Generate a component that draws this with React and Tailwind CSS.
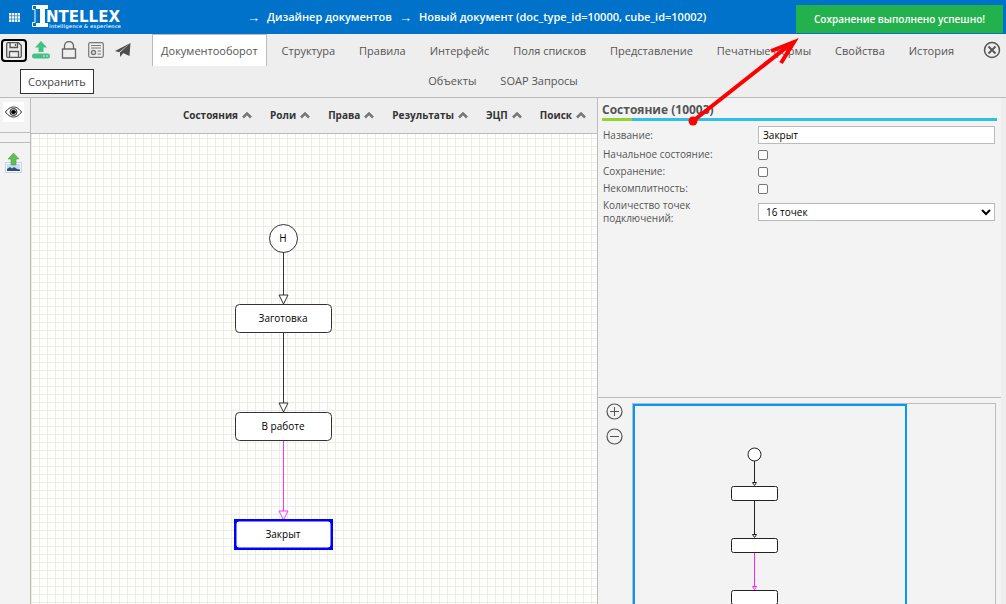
const TABS = [
  'Документооборот',
  'Структура',
  'Правила',
  'Интерфейс',
  'Поля списков',
  'Представление',
  'Печатные формы',
  'Свойства',
  'История',
]

const MORE_TABS = ['Объекты', 'SOAP Запросы']

const MENUS = ['Состояния', 'Роли', 'Права', 'Результаты', 'ЭЦП', 'Поиск']

const FLAGS = [
  { id: 'initial', label: 'Начальное состояние:' },
  { id: 'saving', label: 'Сохранение:' },
  { id: 'incomplete', label: 'Некомплитность:' },
]

function Logo() {
  return (
    <svg width="94" height="28" viewBox="0 0 94 28" role="img" aria-label="Intellex">
      <path d="M5 2h12v4h-3v14h3v4H5v-4h4V6H5z" fill="#fff" />
      <path d="M7 2.500H1.500v4H4v13H1.500v4H7" fill="none" stroke="#fff" />
      <text x="15" y="19" fill="#fff" fontSize="15" fontWeight="700" fontFamily="DejaVu Sans, sans-serif">NTELLEX</text>
      <text x="18" y="25" fill="#b9dcf7" fontSize="5" fontFamily="DejaVu Sans, sans-serif">intelligence &amp; experience</text>
    </svg>
  )
}

function AppsIcon() {
  return (
    <svg width="11" height="9" viewBox="0 0 11 9" fill="#fff" aria-hidden="true">
      {[0, 3.2, 6.4].map((y) => [0, 2.9, 5.8, 8.7].map((x) => <rect key={`${x}-${y}`} x={x} y={y} width="2.300" height="2.500" />))}
    </svg>
  )
}

function SaveIcon() {
  return (
    <svg width="16" height="16" viewBox="0 0 16 16" fill="none" stroke="#555" strokeWidth="1.3" aria-hidden="true">
      <path d="M2 .7h10.5l2.8 2.8V14a1.3 1.3 0 0 1-1.3 1.3H2A1.3 1.3 0 0 1 .7 14V2A1.3 1.3 0 0 1 2 .7z" />
      <path d="M4 1v4.5h7.5V1M9.5 2v2M3.5 15V9.5h9V15" />
    </svg>
  )
}

function UploadIcon() {
  return (
    <svg width="18" height="18" viewBox="0 0 18 18" fill="#43c084" aria-hidden="true">
      <path d="M9 0l6 6.5h-3.5V11h-5V6.5H3z" />
      <rect x="0" y="12.500" width="18" height="5" rx="2.500" />
      <circle cx="12" cy="15" r=".8" fill="#eee" />
      <circle cx="15" cy="15" r=".8" fill="#eee" />
    </svg>
  )
}

function LockIcon() {
  return (
    <svg width="16" height="18" viewBox="0 0 16 18" fill="none" stroke="#666" strokeWidth="1.300" aria-hidden="true">
      <path d="M1.500 8h13v9h-13zM3.500 8V5a4.500 4.500 0 0 1 9 0v3" />
    </svg>
  )
}

function ReportIcon() {
  return (
    <svg width="16" height="16" viewBox="0 0 16 16" fill="none" stroke="#777" strokeWidth="1.200" aria-hidden="true">
      <rect x=".7" y=".7" width="14.600" height="14.600" rx="1.500" />
      <path d="M3 3.500h10M3 6h10M9.500 9h3.500M9.500 12h3.500" />
      <circle cx="5.500" cy="10.500" r="2" strokeWidth="1.500" />
    </svg>
  )
}

function SendIcon() {
  return (
    <svg width="16" height="14" viewBox="0 0 16 14" fill="#4d4d4d" aria-hidden="true">
      <path d="M15.500 0L0 8l4 1.200zM15.500 0L5 9.500V14l2.500-3zM15.500 0L8 10l6.500 3z" />
    </svg>
  )
}

function CloseIcon() {
  return (
    <svg width="18" height="18" viewBox="0 0 18 18" fill="none" stroke="#555" strokeWidth="1.500" aria-hidden="true">
      <circle cx="9" cy="9" r="7.500" />
      <path d="M5.500 5.500l7 7M12.500 5.500l-7 7" strokeWidth="1.800" />
    </svg>
  )
}

function EyeIcon() {
  return (
    <svg width="17" height="12" viewBox="0 0 17 12" fill="none" stroke="#222" aria-hidden="true">
      <path d="M.5 6C3.500 2 6 1 8.500 1s5 1 8 5c-3 4-5.500 5-8 5s-5-1-8-5z" />
      <circle cx="8.500" cy="6" r="3.500" />
      <circle cx="8.500" cy="6" r="2" fill="#000" />
    </svg>
  )
}

function ExportImageIcon() {
  return (
    <svg width="17" height="20" viewBox="0 0 17 20" aria-hidden="true">
      <rect x=".5" y="9.500" width="16" height="10" fill="#f4f8fc" stroke="#c9d3dc" />
      <rect x="2" y="11" width="13" height="7" fill="#c9def2" />
      <path d="M2 18v-2l3-2 2 1.500L9 14l3 2 3 .5V18z" fill="#2f4f7c" />
      <path d="M8.500 0L14 6h-3v6H6V6H3z" fill="#62bd57" stroke="#4ba344" strokeWidth=".6" />
    </svg>
  )
}

function ZoomIcon({ plus }) {
  return (
    <svg width="17" height="17" viewBox="0 0 17 17" fill="none" stroke="#555" aria-hidden="true">
      <circle cx="8.500" cy="8.500" r="7.500" strokeWidth="1.200" />
      <path d={plus ? 'M4 8.500h9M8.500 4v9' : 'M4 8.500h9'} />
    </svg>
  )
}

function Workflow() {
  return (
    <svg className="absolute left-0 top-0" width="400" height="440" fill="#fff" stroke="#333" fontFamily="Open Sans, sans-serif" fontSize="10">
      <circle cx="252.500" cy="104.500" r="14" />
      <path d="M252.500 118v43M252.500 198v71" />
      <path d="M248 161h9l-4.500 9zM248 269h9l-4.500 9z" />
      <path d="M252.500 306v71M248 377h9l-4.500 9z" stroke="#f3f" />
      <rect x="204.500" y="170.500" width="96" height="28" rx="4" />
      <rect x="204.500" y="278.500" width="96" height="28" rx="4" />
      <rect x="204.500" y="386.500" width="96" height="28" stroke="#00f" strokeWidth="3" />
      <rect x="205.500" y="387.500" width="94" height="26" rx="3" stroke="none" />
      <g fill="#000" stroke="none" textAnchor="middle">
        <text x="252" y="108">Н</text>
        <text x="252" y="188">Заготовка</text>
        <text x="252" y="296">В работе</text>
        <text x="252" y="404">Закрыт</text>
      </g>
    </svg>
  )
}

function MiniWorkflow() {
  return (
    <svg className="block" width="200" height="240" fill="#fff" stroke="#222" aria-hidden="true">
      <circle cx="119.500" cy="48.500" r="6.500" />
      <path d="M119.500 55v22M119.500 94v35" />
      <path d="M117.500 76.500h4l-2 3zM117.500 128.500h4l-2 3z" />
      <path d="M119.500 146v35M117.500 180.500h4l-2 3z" stroke="#f2f" />
      <rect x="96.500" y="80.500" width="46" height="14" rx="2" />
      <rect x="96.500" y="132.500" width="46" height="14" rx="2" />
      <rect x="96.500" y="184.500" width="46" height="14" rx="2" />
    </svg>
  )
}

function StatePanel() {
  return (
    <section className="min-h-[299px] px-1 pt-1">
      <h2 className="text-[12px] font-bold leading-4 text-[#555]">Состояние (10003)</h2>
      <div className="flex h-[3px]">
        <div className="w-[30px] bg-[#8fd42f]" />
        <div className="flex-1 bg-[#2fc0ea]" />
      </div>
      <form className="grid grid-cols-[155px_1fr] items-center gap-y-1 pl-px pr-[2px] pt-[5px] text-[10px] leading-[13px] text-[#555]">
        <label htmlFor="name">Название:</label>
        <input id="name" type="text" defaultValue="Закрыт" className="h-[18px] w-full border border-[#bbb] bg-white px-1 text-black" />
        {FLAGS.map((f) => (
          <div key={f.id} className="contents">
            <label htmlFor={f.id}>{f.label}</label>
            <input
              id={f.id}
              type="checkbox"
              className="h-[10px] w-[10px] appearance-none rounded-[2px] border border-[#767676] bg-white checked:bg-[#0072c9]"
            />
          </div>
        ))}
        <label htmlFor="points" className="w-[100px]">Количество точек подключений:</label>
        <select id="points" className="h-[18px] w-full border border-[#bbb] bg-white px-[3px] text-black">
          <option>16 точек</option>
        </select>
      </form>
    </section>
  )
}

function App() {
  return (
    <div className="relative flex h-screen flex-col overflow-hidden bg-[#eee] font-['Open_Sans',sans-serif]">
      <header className="flex h-[34px] shrink-0 items-center bg-[#0072c9] text-[11px] font-semibold text-white">
        <button type="button" aria-label="Меню" className="ml-[9px] mr-[11px]"><AppsIcon /></button>
        <a href="#home"><Logo /></a>
        <nav className="ml-[122px] flex items-center gap-[7px]">
          <span className="text-[13px] leading-4">→</span>
          <a href="#designer">Дизайнер документов</a>
          <span className="text-[13px] leading-4">→</span>
          <a href="#document">Новый документ (doc_type_id=10000, cube_id=10002)</a>
        </nav>
      </header>

      <div className="relative shrink-0 border-b border-[#bbb] text-[11px] text-[#555]">
        <div className="flex h-8 items-center">
          <button type="button" aria-label="Сохранить" className="ml-px flex h-[23px] w-[26px] items-center justify-center rounded-[4px] border-2 border-black">
            <SaveIcon />
          </button>
          <div className="ml-[5px] flex items-center gap-[11px]">
            <button type="button" aria-label="Загрузить"><UploadIcon /></button>
            <button type="button" aria-label="Блокировка"><LockIcon /></button>
            <button type="button" aria-label="Отчёт"><ReportIcon /></button>
            <button type="button" aria-label="Отправить"><SendIcon /></button>
          </div>
          <nav className="ml-[21px] flex h-full flex-1 justify-between">
            {TABS.map((t, i) => (
              <a
                key={t}
                href="#tab"
                className={`flex items-center whitespace-nowrap border-x border-t px-2 pt-px ${i === 0 ? 'border-[#bbb] bg-white' : 'border-transparent'}`}
              >
                {t}
              </a>
            ))}
          </nav>
          <button type="button" aria-label="Закрыть" className="ml-5 mr-[5px]"><CloseIcon /></button>
        </div>
        <nav className="flex h-[31px] items-center justify-center gap-6">
          {MORE_TABS.map((t) => <a key={t} href="#tab">{t}</a>)}
        </nav>
        <div role="tooltip" className="absolute left-5 top-[35px] border border-[#333] bg-white px-[7px] py-[3px] leading-[17px] text-[#444]">
          Сохранить
        </div>
      </div>

      <div className="flex min-h-0 flex-1">
        <aside className="flex w-[31px] shrink-0 flex-col border-r border-[#bbb] bg-[#f3f3f3]">
          <button type="button" aria-label="Просмотр" className="ml-[3px] mt-1 flex h-5 w-[21px] items-center justify-center bg-white"><EyeIcon /></button>
          <div className="mt-[10px] h-[11px] border-y border-[#bbb]" />
          <button type="button" aria-label="Экспорт изображения" className="ml-[5px] mt-[10px] self-start"><ExportImageIcon /></button>
        </aside>

        <main className="flex min-w-0 flex-1 flex-col">
          <nav className="flex h-9 shrink-0 items-center justify-end gap-[18px] border-b border-[#bbb] pr-[11px] text-[10px] font-bold text-[#333]">
            {MENUS.map((m) => (
              <button key={m} type="button" className="flex items-center gap-1">
                {m}
                <svg width="10" height="7" viewBox="0 0 10 7" fill="none" stroke="#777" strokeWidth="2.500" aria-hidden="true">
                  <path d="M1 5.500l4-4 4 4" />
                </svg>
              </button>
            ))}
          </nav>
          <div className="relative flex-1 overflow-hidden bg-white bg-[linear-gradient(to_right,#e9eedf_1px,transparent_1px),linear-gradient(to_bottom,#e9eedf_1px,transparent_1px)] bg-[length:8px_8px] bg-[position:0_4px]">
            <Workflow />
          </div>
        </main>

        <aside className="flex w-[409px] shrink-0 flex-col border-l border-[#bbb] pr-[5px]">
          <div className="flex min-h-0 flex-1 flex-col bg-[#f3f3f3]">
            <StatePanel />
            <section className="flex min-h-0 flex-1 border-t border-[#bbb] pl-2 pr-[5px] pt-[5px]">
              <div className="flex flex-col gap-2">
                <button type="button" aria-label="Увеличить"><ZoomIcon plus /></button>
                <button type="button" aria-label="Уменьшить"><ZoomIcon /></button>
              </div>
              <div className="ml-[9px] flex-1 overflow-hidden border-x border-t border-[#bbb]">
                <div className="h-full w-[274px] overflow-hidden border-x-2 border-t-2 border-[#09f]">
                  <MiniWorkflow />
                </div>
              </div>
            </section>
          </div>
        </aside>
      </div>

      <div role="status" className="absolute right-[3px] top-[5px] flex h-7 items-center bg-[#22b14c] px-[18px] text-[10px] font-semibold text-white">
        Сохранение выполнено успешно!
      </div>
      <svg className="pointer-events-none absolute right-[206px] top-9" width="120" height="94" fill="none" stroke="#f00" strokeWidth="4" aria-hidden="true">
        <path d="M13 85L112 7M91 15l23-9-13 21" />
        <circle cx="13" cy="85" r="4.500" fill="#f00" stroke="none" />
      </svg>
    </div>
  )
}

export default App
